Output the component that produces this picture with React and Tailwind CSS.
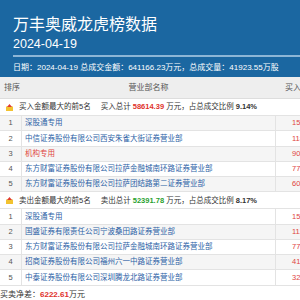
import React from 'react';

const buyRows = [
  { name: '深股通专用', amount: '15301.37' },
  { name: '中信证券股份有限公司西安朱雀大街证券营业部', amount: '11876.52' },
  { name: '机构专用', amount: '9023.18', red: true },
  { name: '东方财富证券股份有限公司拉萨金融城南环路证券营业部', amount: '7712.44' },
  { name: '东方财富证券股份有限公司拉萨团结路第二证券营业部', amount: '6061.90' },
];

const sellRows = [
  { name: '深股通专用', amount: '15244.06' },
  { name: '国盛证券有限责任公司宁波桑田路证券营业部', amount: '1120.35' },
  { name: '东方财富证券股份有限公司拉萨金融城南环路证券营业部', amount: '7712.44' },
  { name: '招商证券股份有限公司福州六一中路证券营业部', amount: '4108.27' },
  { name: '中泰证券股份有限公司深圳腾龙北路证券营业部', amount: '3205.63' },
];

const SectionIcon = () => (
  <svg width="7" height="7" viewBox="0 0 7 7" className="shrink-0">
    <rect x="0" y="2.5" width="7" height="4.5" fill="#f2c230" />
    <path d="M3.5 0 L6 3 L1 3 Z" fill="#e03a2f" />
  </svg>
);

const Row = ({ idx, row, gray }) => (
  <div className={`grid grid-cols-[22px_253px_60px] h-[15.25px] border-b border-[#e3e3e3] ${gray ? 'bg-[#f5f5f5]' : 'bg-white'}`}>
    <div className="flex items-center justify-center text-[#555] border-r border-[#e3e3e3]">{idx}</div>
    <div className={`flex items-center pl-[3px] whitespace-nowrap ${row.red ? 'text-[#e0453f]' : 'text-[#2c62a6]'}`}>{row.name}</div>
    <div className="flex items-center pl-[16px] text-[#e0453f] border-l border-[#e3e3e3]">{row.amount}</div>
  </div>
);

const SectionHeader = ({ label, totalLabel, total, totalColor, ratio }) => (
  <div className="flex items-center h-[17px] pl-[6px] gap-[6px] bg-white border-b border-[#e3e3e3] whitespace-nowrap text-[#333]">
    <SectionIcon />
    <span>{label}</span>
    <span className="ml-[4px]">
      {totalLabel} <b className={`font-bold ${totalColor}`}>{total}</b> 万元，占总成交比例 <b className="font-bold">{ratio}</b>
    </span>
  </div>
);

export default function App() {
  return (
    <div
      className="w-[300px] h-[300px] overflow-hidden bg-white"
      style={{ fontFamily: '"Liberation Sans", "Noto Sans CJK SC", sans-serif' }}
    >
      {/* Blue header */}
      <div className="bg-[#1b67a1] h-[77px] pl-[13px] text-white">
        <div className="pt-[15px] text-[16px] leading-[20px]">万丰奥威龙虎榜数据</div>
        <div className="mt-[1px] text-[12.5px] leading-[16px]">2024-04-19</div>
        <div className="mt-[3px] h-[2px] bg-[#8db6d6]" />
        <div className="mt-[6px] text-[8px] leading-[10px] whitespace-nowrap">
          日期：2024-04-19 总成交金额：641166.23万元，总成交量：41923.55万股
        </div>
      </div>

      <div className="text-[7.5px] leading-none">
        {/* Table header */}
        <div className="grid grid-cols-[22px_253px_60px] h-[22px] bg-[#eeeeee] border-b border-[#dddddd] text-[#555] text-[8px]">
          <div className="flex items-center pl-[4px]">排序</div>
          <div className="flex items-center justify-center">营业部名称</div>
          <div className="flex items-center pl-[10px]">买入</div>
        </div>

        <SectionHeader label="买入金额最大的前5名" totalLabel="买入总计" total="58614.39" totalColor="text-[#e0322b]" ratio="9.14%" />
        {buyRows.map((r, i) => (
          <Row key={i} idx={i + 1} row={r} gray={i % 2 === 0} />
        ))}

        <SectionHeader label="卖出金额最大的前5名" totalLabel="卖出总计" total="52391.78" totalColor="text-[#2aa12e]" ratio="8.17%" />
        {sellRows.map((r, i) => (
          <Row key={i} idx={i + 1} row={r} gray={i % 2 === 1} />
        ))}

        <div className="flex items-center h-[18px] text-[8px] text-[#333] whitespace-nowrap">
          买卖净差：<b className="font-bold text-[#e0322b]">6222.61</b>万元
        </div>
      </div>
    </div>
  );
}
